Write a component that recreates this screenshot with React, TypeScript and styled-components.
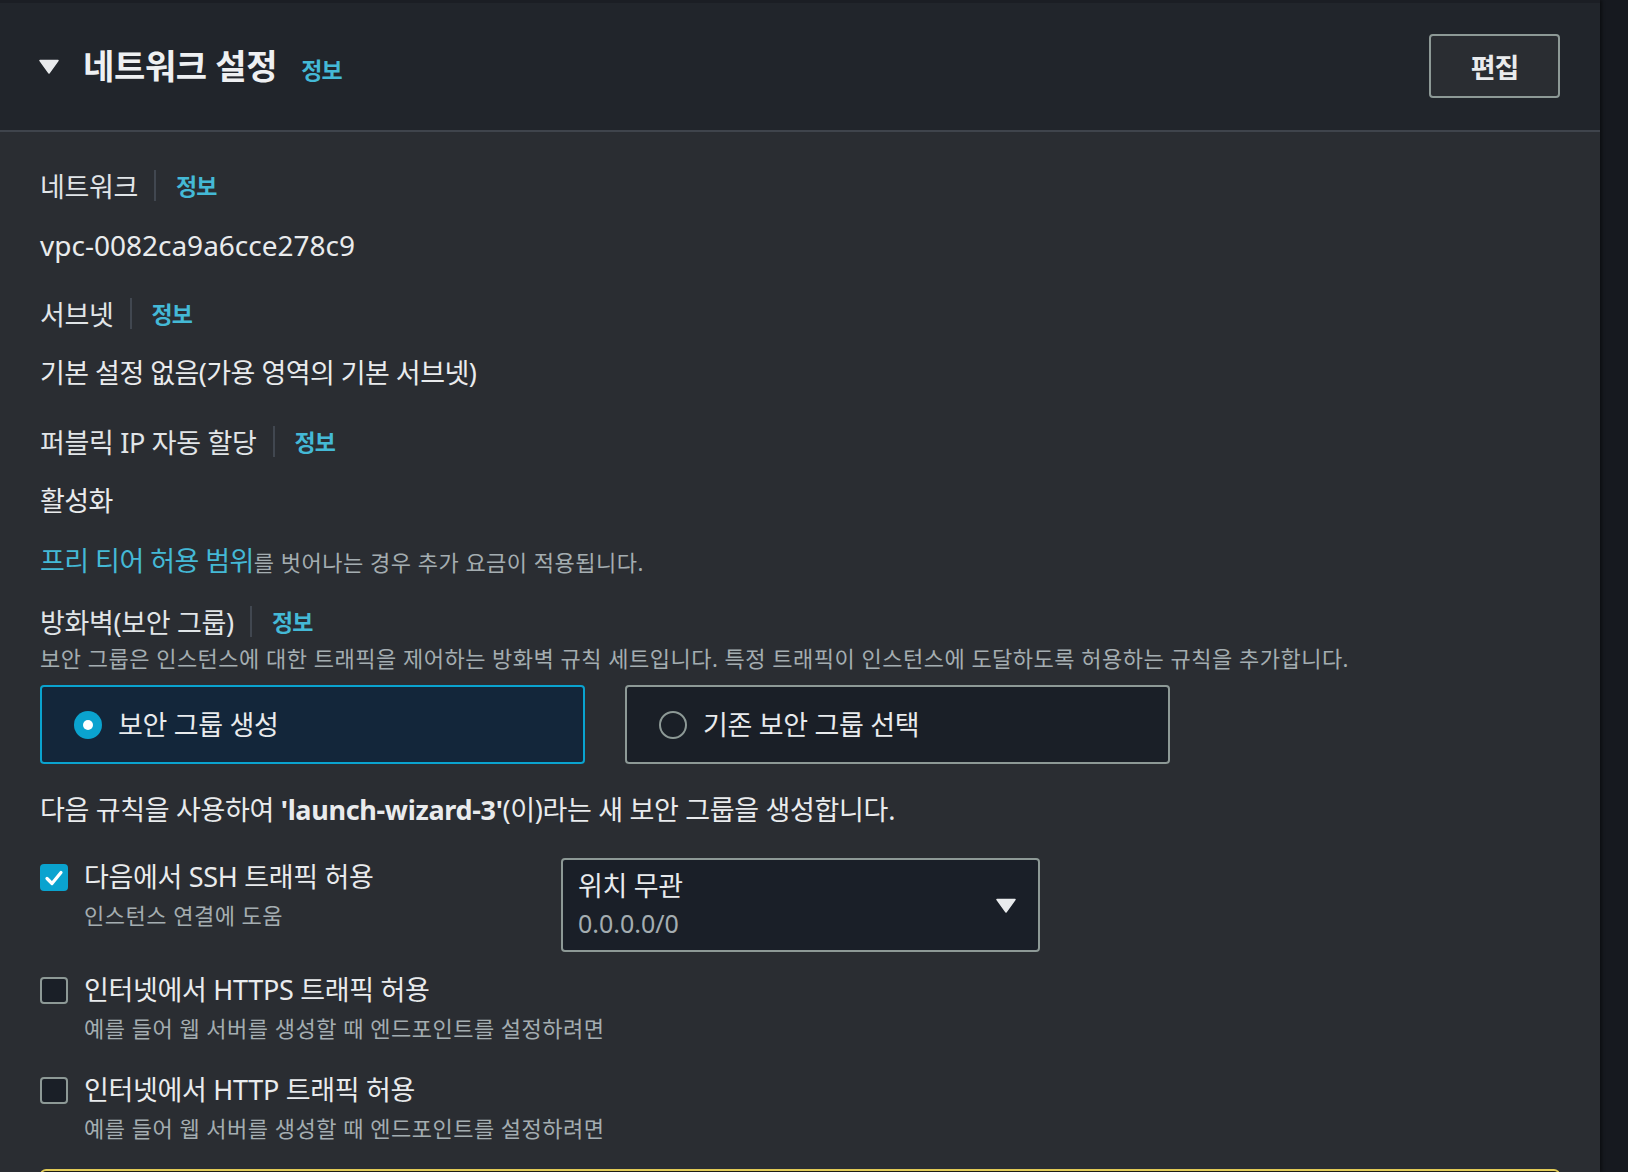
import React from "react";
import styled, { createGlobalStyle } from "styled-components";

const GlobalStyle = createGlobalStyle`
  html, body {
    margin: 0;
    padding: 0;
    background: #16191f;
  }
  body {
    font-family: "Noto Sans", "Noto Sans CJK KR", sans-serif;
    color: #e9ebed;
    letter-spacing: -0.02em;
    -webkit-font-smoothing: antialiased;
  }
  * { box-sizing: border-box; }
`;

const Page = styled.div`
  display: flex;
  width: 1628px;
  height: 1172px;
  overflow: hidden;
  background: #16191f;
`;

const Panel = styled.section`
  flex: 0 0 1600px;
  width: 1600px;
  height: 1172px;
  border-top: 3px solid #1b1e24;
  background: #2a2d32;
  box-shadow: 2px 0 3px rgba(0, 0, 0, 0.45);
`;

const Header = styled.header`
  height: 129px;
  display: flex;
  align-items: center;
  justify-content: space-between;
  padding: 0 40px 1px 39px;
  background: #21252b;
  border-bottom: 2px solid #3f444c;
`;

const TitleGroup = styled.div`
  display: flex;
  align-items: center;
`;

const TitleText = styled.div`
  display: flex;
  align-items: baseline;
  margin-left: 24px;
`;

const Title = styled.h2`
  margin: 0;
  font-size: 34px;
  font-weight: 700;
  line-height: 44px;
  letter-spacing: -0.01em;
  color: #eef0f2;
`;

const InfoLink = styled.a<{ $gap?: number }>`
  margin-left: ${(p) => p.$gap ?? 0}px;
  font-size: 23px;
  font-weight: 700;
  letter-spacing: -0.04em;
  color: #44b9d6;
  text-decoration: none;
  cursor: pointer;
`;

const EditButton = styled.button`
  width: 131px;
  height: 64px;
  border: 2px solid #8d9996;
  border-radius: 4px;
  background: #2a2d32;
  color: #e9ebed;
  font-family: inherit;
  font-size: 27px;
  font-weight: 700;
  letter-spacing: -0.04em;
  cursor: pointer;
`;

const Body = styled.div`
  padding: 35px 40px 0 40px;
`;

const Field = styled.div<{ $gap?: number }>`
  margin-top: ${(p) => p.$gap ?? 0}px;
`;

const LabelRow = styled.div`
  display: flex;
  align-items: center;
  height: 36px;
  font-size: 27px;
  color: #e1e5e8;
`;

const Divider = styled.span`
  width: 2px;
  height: 31px;
  background: #414750;
  margin: 0 20px 0 16px;
`;

const Value = styled.div<{ $latin?: boolean }>`
  margin-top: 24px;
  font-size: ${(p) => (p.$latin ? 28 : 27)}px;
  line-height: 36px;
  color: #e9ebed;
  letter-spacing: ${(p) => (p.$latin ? "0" : "-0.02em")};
`;

const Constraint = styled.div`
  margin-top: 26px;
  line-height: 32px;
  font-size: 22px;
  letter-spacing: 0.5px;
  color: #a4adb1;
`;

const ConstraintLink = styled.a`
  font-size: 27px;
  letter-spacing: -0.02em;
  color: #44b9d6;
  text-decoration: none;
`;

const Description = styled.div`
  margin-top: 4px;
  font-size: 22px;
  line-height: 30px;
  letter-spacing: 0.5px;
  color: #a4adb1;
  white-space: nowrap;
`;

const Tiles = styled.div`
  display: flex;
  gap: 40px;
  margin-top: 12px;
`;

const Tile = styled.label<{ $checked?: boolean }>`
  display: flex;
  align-items: center;
  width: 545px;
  height: 79px;
  padding-left: 32px;
  border: 2px solid ${(p) => (p.$checked ? "#0aa3cf" : "#8d9996")};
  border-radius: 4px;
  background: ${(p) => (p.$checked ? "#13263a" : "#1a1f27")};
  font-size: 27px;
  color: #e9ebed;
  cursor: pointer;
`;

const Radio = styled.span<{ $checked?: boolean }>`
  position: relative;
  flex: 0 0 28px;
  width: 28px;
  height: 28px;
  border-radius: 50%;
  border: ${(p) => (p.$checked ? "none" : "2px solid #8d9996")};
  background: ${(p) => (p.$checked ? "#0aa3cf" : "transparent")};

  &::after {
    content: "";
    display: ${(p) => (p.$checked ? "block" : "none")};
    position: absolute;
    left: 9px;
    top: 9px;
    width: 10px;
    height: 10px;
    border-radius: 50%;
    background: #ffffff;
  }
`;

const TileText = styled.span`
  margin-left: 16px;
  line-height: 36px;
`;

const RuleText = styled.div`
  margin-top: 28px;
  font-size: 27px;
  line-height: 36px;
  color: #e9ebed;
`;

const Strong = styled.b`
  font-weight: 700;
`;

const Rules = styled.div`
  display: flex;
  flex-direction: column;
  gap: 20px;
  margin-top: 31px;
`;

const RuleRow = styled.div`
  display: flex;
  align-items: flex-start;
`;

const CheckItem = styled.div`
  flex: 0 0 521px;
  width: 521px;
  display: flex;
  align-items: flex-start;
  padding-bottom: 8px;
  white-space: nowrap;
`;

const CheckBox = styled.span<{ $checked?: boolean }>`
  flex: 0 0 28px;
  width: 28px;
  height: 27px;
  margin-top: 5px;
  display: flex;
  align-items: center;
  justify-content: center;
  border-radius: 4px;
  border: ${(p) => (p.$checked ? "none" : "2px solid #8d9996")};
  background: ${(p) => (p.$checked ? "#0aa3cf" : "#1a1f27")};
`;

const CheckText = styled.div`
  margin-left: 16px;
  display: flex;
  flex-direction: column;
`;

const CheckLabel = styled.div`
  font-size: 27px;
  line-height: 36px;
  color: #e9ebed;
`;

const CheckSub = styled.div`
  margin-top: 4px;
  font-size: 22px;
  line-height: 32px;
  letter-spacing: 0.5px;
  color: #a4adb1;
`;

const Select = styled.div`
  flex: 0 0 479px;
  width: 479px;
  height: 94px;
  display: flex;
  align-items: center;
  justify-content: space-between;
  padding: 0 22px 0 15px;
  margin-top: -1px;
  border: 2px solid #8d9996;
  border-radius: 4px;
  background: #1a1f28;
`;

const SelectTexts = styled.div`
  display: flex;
  flex-direction: column;
`;

const SelectMain = styled.div`
  font-size: 27px;
  line-height: 36px;
  color: #e9ebed;
`;

const SelectSub = styled.div`
  font-size: 25px;
  line-height: 38px;
  color: #a4adb1;
  letter-spacing: 0;
`;

const Warning = styled.div`
  margin-top: 17px;
  width: 1520px;
  height: 160px;
  border: 2px solid #e0ca57;
  border-radius: 6px;
  background: #1e1d15;
`;

const Caret = ({ size = 20 }: { size?: number }) => (
  <svg width={size} height={size * 0.75} viewBox="0 0 20 15" aria-hidden>
    <path d="M1 1.5 H19 L10 14 Z" fill="#e9ebed" stroke="#e9ebed" strokeWidth="1.5" strokeLinejoin="round" />
  </svg>
);

const Check = () => (
  <svg width="20" height="18" viewBox="0 0 20 18" aria-hidden>
    <polyline points="3,9.5 8,14.5 17,3.5" fill="none" stroke="#ffffff" strokeWidth="3.2" strokeLinecap="round" strokeLinejoin="round" />
  </svg>
);

type RuleProps = {
  checked?: boolean;
  label: React.ReactNode;
  sub: string;
};

const RuleCheck = ({ checked, label, sub }: RuleProps) => (
  <CheckItem>
    <CheckBox $checked={checked}>{checked && <Check />}</CheckBox>
    <CheckText>
      <CheckLabel>{label}</CheckLabel>
      <CheckSub>{sub}</CheckSub>
    </CheckText>
  </CheckItem>
);

export default function App() {
  return (
    <>
      <GlobalStyle />
      <Page>
        <Panel>
          <Header>
            <TitleGroup>
              <Caret size={20} />
              <TitleText>
                <Title>네트워크 설정</Title>
                <InfoLink $gap={24}>정보</InfoLink>
              </TitleText>
            </TitleGroup>
            <EditButton>편집</EditButton>
          </Header>

          <Body>
            <Field>
              <LabelRow>
                네트워크
                <Divider />
                <InfoLink>정보</InfoLink>
              </LabelRow>
              <Value $latin>vpc-0082ca9a6cce278c9</Value>
            </Field>

            <Field $gap={32}>
              <LabelRow>
                서브넷
                <Divider />
                <InfoLink>정보</InfoLink>
              </LabelRow>
              <Value>기본 설정 없음(가용 영역의 기본 서브넷)</Value>
            </Field>

            <Field $gap={32}>
              <LabelRow>
                퍼블릭 IP 자동 할당
                <Divider />
                <InfoLink>정보</InfoLink>
              </LabelRow>
              <Value>활성화</Value>
              <Constraint>
                <ConstraintLink>프리 티어 허용 범위</ConstraintLink>를 벗어나는 경우 추가 요금이 적용됩니다.
              </Constraint>
            </Field>

            <Field $gap={25}>
              <LabelRow>
                방화벽(보안 그룹)
                <Divider />
                <InfoLink>정보</InfoLink>
              </LabelRow>
              <Description>
                보안 그룹은 인스턴스에 대한 트래픽을 제어하는 방화벽 규칙 세트입니다. 특정 트래픽이 인스턴스에 도달하도록 허용하는 규칙을 추가합니다.
              </Description>
              <Tiles>
                <Tile $checked>
                  <Radio $checked />
                  <TileText>보안 그룹 생성</TileText>
                </Tile>
                <Tile>
                  <Radio />
                  <TileText>기존 보안 그룹 선택</TileText>
                </Tile>
              </Tiles>
            </Field>

            <RuleText>
              다음 규칙을 사용하여 <Strong>'launch-wizard-3'</Strong>(이)라는 새 보안 그룹을 생성합니다.
            </RuleText>

            <Rules>
              <RuleRow>
                <RuleCheck checked label="다음에서 SSH 트래픽 허용" sub="인스턴스 연결에 도움" />
                <Select>
                  <SelectTexts>
                    <SelectMain>위치 무관</SelectMain>
                    <SelectSub>0.0.0.0/0</SelectSub>
                  </SelectTexts>
                  <Caret size={20} />
                </Select>
              </RuleRow>
              <RuleRow>
                <RuleCheck label="인터넷에서 HTTPS 트래픽 허용" sub="예를 들어 웹 서버를 생성할 때 엔드포인트를 설정하려면" />
              </RuleRow>
              <RuleRow>
                <RuleCheck label="인터넷에서 HTTP 트래픽 허용" sub="예를 들어 웹 서버를 생성할 때 엔드포인트를 설정하려면" />
              </RuleRow>
            </Rules>

            <Warning />
          </Body>
        </Panel>
      </Page>
    </>
  );
}
